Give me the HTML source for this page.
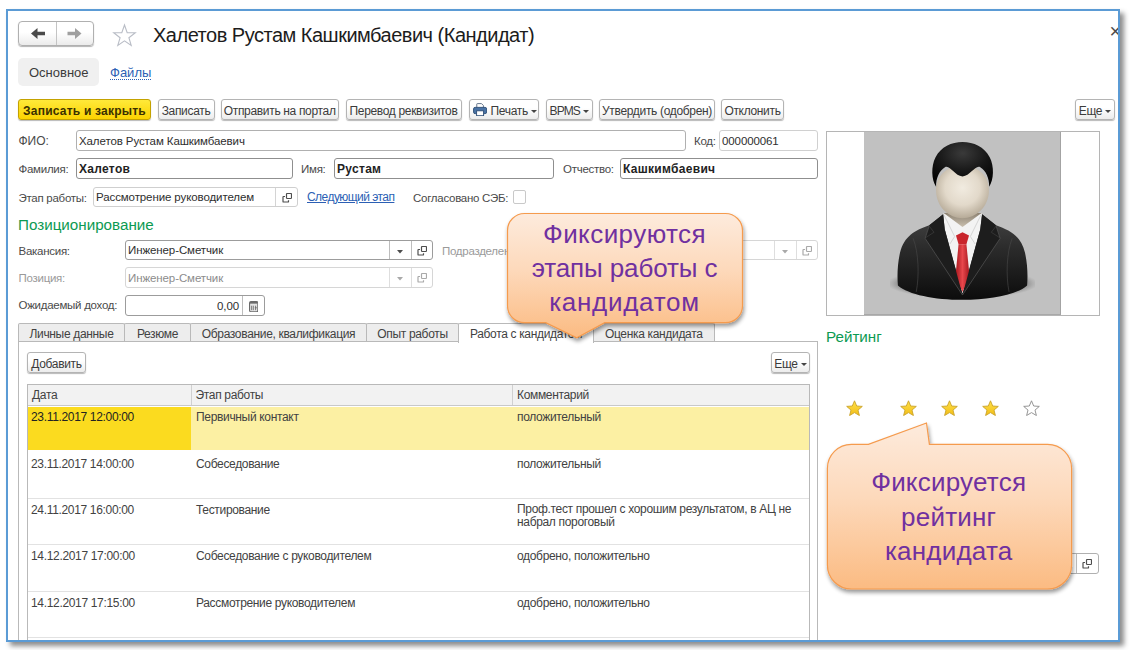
<!DOCTYPE html>
<html lang="ru">
<head>
<meta charset="utf-8">
<title>Халетов Рустам Кашкимбаевич (Кандидат)</title>
<style>
*{box-sizing:border-box;margin:0;padding:0}
html,body{width:1130px;height:650px;overflow:hidden;background:#fff}
body{font-family:"Liberation Sans",Arial,sans-serif;font-size:12px;color:#424242;letter-spacing:-0.33px;position:relative}
.abs{position:absolute;white-space:nowrap}
#frame{position:absolute;left:6px;top:9px;width:1114px;height:633px;border:2px solid #5b9bd5;background:#fff;box-shadow:4px 4px 5px rgba(0,0,0,.45);overflow:hidden}
#win{position:absolute;left:-8px;top:-11px;width:1130px;height:650px}
/* everything inside #win uses page coordinates */
.btn{position:absolute;height:21px;line-height:20px;padding-top:1px;border:1px solid #b4b4b4;border-radius:3px;background:linear-gradient(#fff,#fff 40%,#ececec);box-shadow:0 1px 1px rgba(0,0,0,.28);text-align:center;white-space:nowrap;color:#3b3b3b}
.btn.y{background:linear-gradient(#ffe93a,#fbd300);border-color:#c4a200;font-weight:bold;letter-spacing:.22px;color:#3a3000}
.inp{position:absolute;height:21px;line-height:20px;border:1px solid #b0b0b0;border-radius:3px;background:#fff;padding-left:2px;color:#2e2e2e;font-size:11.5px;letter-spacing:-.1px;white-space:nowrap;overflow:hidden}
.inp.b{font-weight:bold;font-size:12px;letter-spacing:.3px;color:#222;border-color:#8f8f8f}
.inp.dis{border-color:#d6d6d6;color:#8c8c8c}
.lbl{position:absolute;white-space:nowrap;line-height:22px;height:21px;color:#4a4a4a;font-size:11.5px;letter-spacing:-.27px}
.lbl.dis{color:#9a9a9a}
.grp{position:absolute;color:#0c9a52;font-size:15.2px;letter-spacing:0;white-space:nowrap}
a.lnk{position:absolute;color:#2c5fb4;text-decoration:underline;white-space:nowrap;line-height:20px}
.ib{position:absolute;top:0;bottom:0;width:22px;border-left:1px solid #bdbdbd;color:#4d4d4d}
.ib svg{position:absolute}
.dis .ib{color:#a9a9a9;border-color:#dedede}
.dda{display:inline-block;width:0;height:0;border-left:3px solid transparent;border-right:3px solid transparent;border-top:3.5px solid #444;vertical-align:middle;margin-left:3px;position:relative;top:0}
.tab{position:absolute;top:323px;height:18px;line-height:20px;overflow:hidden;border:1px solid #b9b9b9;border-bottom:none;background:#ededed;text-align:center;white-space:nowrap;border-radius:2px 2px 0 0}
.tab.act{background:#fff;height:19.5px;z-index:2}
.th{position:absolute;top:0;height:20px;line-height:21px;padding-left:4px;border-right:1px solid #d0d0d0;background:#f2f2f2;white-space:nowrap}
.row{position:absolute;left:0;width:782px;border-bottom:1px solid #e2e2e2}
.c{position:absolute;top:4px;white-space:nowrap;line-height:14px}
.callout{position:absolute;z-index:6;font-size:26px;letter-spacing:.22px;color:#7030a0;text-align:center;line-height:34.3px}
</style>
</head>
<body>
<div id="frame"><div id="win">
<svg width="0" height="0" style="position:absolute"><defs>
<symbol id="open" viewBox="0 0 10 10"><rect x="4.5" y="0.5" width="5" height="5" rx=".8" fill="none" stroke="currentColor" stroke-width="1.2"/><path d="M3 3.5 H1.6 Q1 3.5 1 4.1 V8.4 Q1 9 1.6 9 H5.9 Q6.5 9 6.5 8.4 V7.2" fill="none" stroke="currentColor" stroke-width="1.2"/></symbol>
<symbol id="dd" viewBox="0 0 6 4"><path d="M0 0 H6 L3 3.6 Z" fill="currentColor"/></symbol>
<linearGradient id="stg" x1="0" y1="0" x2="0" y2="1"><stop offset="0" stop-color="#ffe24a"/><stop offset="1" stop-color="#f2bd16"/></linearGradient>
<symbol id="star" viewBox="0 0 17 16"><path d="M8.5 0.8 L10.7 6 L16.3 6.4 L12 10.1 L13.4 15.5 L8.5 12.6 L3.6 15.5 L5 10.1 L0.7 6.4 L6.3 6 Z" fill="url(#stg)" stroke="#c9a32a" stroke-width=".9" stroke-linejoin="round"/></symbol>
<symbol id="star0" viewBox="0 0 17 16"><path d="M8.5 0.8 L10.7 6 L16.3 6.4 L12 10.1 L13.4 15.5 L8.5 12.6 L3.6 15.5 L5 10.1 L0.7 6.4 L6.3 6 Z" fill="#fff" stroke="#8a8a8a" stroke-width=".9" stroke-linejoin="round"/></symbol>
</defs></svg>


<!-- nav buttons -->
<div class="abs" style="left:18px;top:21px;width:76px;height:25px;border:1px solid #b0b0b0;border-radius:4px;background:linear-gradient(#fff,#fff 45%,#ebebeb);box-shadow:0 1px 1px rgba(0,0,0,.3)">
  <div class="abs" style="left:37px;top:0;width:1px;height:23px;background:#c4c4c4"></div>
  <svg class="abs" style="left:0;top:0" width="74" height="23" viewBox="0 0 74 23">
    <path d="M12 11.5 L18.5 6 V9.8 H26 V13.2 H18.5 V17 Z" fill="#4a4a4a"/>
    <path d="M62.5 11.5 L56 6 V9.8 H48.5 V13.2 H56 V17 Z" fill="#a0a0a0"/>
  </svg>
</div>
<!-- star -->
<svg class="abs" style="left:112px;top:22.7px" width="26" height="25" viewBox="0 0 26 25"><path d="M12.5 2 L15.2 9.6 L23.3 9.8 L16.9 14.7 L19.2 22.4 L12.5 17.9 L5.8 22.4 L8.1 14.7 L1.7 9.8 L9.8 9.6 Z" fill="#fff" stroke="#b9bdc6" stroke-width="1.1" stroke-linejoin="miter"/></svg>
<div class="abs" id="title" style="left:153px;top:24px;font-size:20px;line-height:22px;letter-spacing:-.5px;color:#1c1c1c">Халетов Рустам Кашкимбаевич (Кандидат)</div>
<div class="abs" style="left:1109.5px;top:19px;font-size:20px;line-height:24px;color:#4a4a4a;letter-spacing:0">×</div>

<!-- nav tabs -->
<div class="abs" style="left:18px;top:57.5px;width:80.5px;height:28.5px;border-radius:5px;background:#f0f0f0"></div>
<div class="abs" style="left:29px;top:64.7px;font-size:13px;line-height:15px;letter-spacing:0;color:#3b3b3b">Основное</div>
<div class="abs" style="left:110px;top:64.5px;font-size:13px;line-height:15px;letter-spacing:0;color:#2c5fb4;border-bottom:1px dotted #2c5fb4;height:15.5px">Файлы</div>

<!-- toolbar -->
<div class="btn y" style="left:18px;top:98.5px;width:133px">Записать и закрыть</div>
<div class="btn" style="left:157.5px;top:98.5px;width:57px">Записать</div>
<div class="btn" style="left:220.7px;top:98.5px;width:118px">Отправить на портал</div>
<div class="btn" style="left:345.5px;top:98.5px;width:116px">Перевод реквизитов</div>
<div class="btn" style="left:469px;top:98.5px;width:70px;text-align:left;padding-left:20.5px">Печать<i class="dda"></i>
  <svg class="abs" style="left:2.5px;top:3.5px" width="14.2" height="13.3" viewBox="0 0 15 14"><path d="M4 5 V1.2 Q4 .6 4.6 .6 H9 L11 2.6 V5" fill="#fff" stroke="#5d6f86" stroke-width="1"/><rect x=".6" y="4.6" width="13.8" height="6.6" rx="1.6" fill="#4a73a5" stroke="#2f4f78" stroke-width="1"/><rect x="3.8" y="8.2" width="7.4" height="5.2" fill="#fff" stroke="#2f4f78" stroke-width="1"/></svg>
</div>
<div class="btn" style="left:546px;top:98.5px;width:46.5px;letter-spacing:-.9px">BPMS<i class="dda"></i></div>
<div class="btn" style="left:599px;top:98.5px;width:116px">Утвердить (одобрен)</div>
<div class="btn" style="left:721px;top:98.5px;width:63px">Отклонить</div>
<div class="btn" style="left:1075px;top:98.5px;width:40px">Еще<i class="dda"></i></div>

<!-- row FIO -->
<div class="lbl" style="left:18.5px;top:130px;font-size:12px;letter-spacing:0">ФИО:</div>
<div class="inp" style="left:76px;top:130px;width:610px">Халетов Рустам Кашкимбаевич</div>
<div class="lbl" style="left:694px;top:130px">Код:</div>
<div class="inp" style="left:719px;top:130px;width:99px;border-color:#d0d0d0">000000061</div>

<!-- row Familia -->
<div class="lbl" style="left:18.5px;top:158px">Фамилия:</div>
<div class="inp b" style="left:76px;top:158px;width:217px">Халетов</div>
<div class="lbl" style="left:301px;top:158px">Имя:</div>
<div class="inp b" style="left:334px;top:158px;width:220px">Рустам</div>
<div class="lbl" style="left:563px;top:158px">Отчество:</div>
<div class="inp b" style="left:620px;top:158px;width:198px">Кашкимбаевич</div>

<!-- row Etap -->
<div class="lbl" style="left:18.5px;top:187px">Этап работы:</div>
<div class="inp" style="left:93px;top:187px;width:205px;height:20px;line-height:19px;border-color:#cfcfcf">Рассмотрение руководителем<div class="ib" style="right:0;border-color:#d4d4d4"><svg width="10" height="10" style="left:5.7px;top:5px"><use href="#open"/></svg></div></div>
<a class="lnk" style="left:307px;top:187px;letter-spacing:-.55px">Следующий этап</a>
<div class="lbl" style="left:413px;top:187px">Согласовано СЭБ:</div>
<div class="abs" style="left:513px;top:190px;width:13px;height:14px;border:1px solid #c9c9c9;border-radius:2px;background:#fff"></div>

<div class="grp" style="left:18px;top:215px;line-height:20px">Позиционирование</div>

<!-- Vakansia -->
<div class="lbl" style="left:18.5px;top:240px">Вакансия:</div>
<div class="inp" style="left:125px;top:240px;width:308px;height:20px;line-height:19px;border-color:#9c9c9c">Инженер-Сметчик<div class="ib" style="right:21px"><svg width="6" height="4" style="left:7px;top:8.5px"><use href="#dd"/></svg></div><div class="ib" style="right:0;width:21px"><svg width="10" height="10" style="left:5px;top:5px"><use href="#open"/></svg></div></div>
<div class="lbl dis" style="left:442px;top:240px">Подразделение:</div>
<div class="inp dis" style="left:530px;top:240px;width:288px;height:20px"><div class="ib" style="right:21px"><svg width="6" height="4" style="left:7px;top:8.5px"><use href="#dd"/></svg></div><div class="ib" style="right:0;width:21px"><svg width="10" height="10" style="left:5px;top:5px"><use href="#open"/></svg></div></div>

<!-- Pozicia -->
<div class="lbl dis" style="left:18.5px;top:267px">Позиция:</div>
<div class="inp dis" style="left:125px;top:267px;width:308px;height:21px;line-height:20px">Инженер-Сметчик<div class="ib" style="right:21px"><svg width="6" height="4" style="left:7px;top:8.5px"><use href="#dd"/></svg></div><div class="ib" style="right:0;width:21px"><svg width="10" height="10" style="left:5px;top:5px"><use href="#open"/></svg></div></div>

<!-- dohod -->
<div class="lbl" style="left:18.5px;top:294px">Ожидаемый доход:</div>
<div class="inp" style="left:125px;top:295px;width:140px;text-align:right;padding-right:25px;border-color:#9c9c9c">0,00<div class="ib" style="right:0"><svg width="9.4" height="11.3" viewBox="0 0 10 12" style="left:5.5px;top:4.5px"><rect x=".6" y=".6" width="8.8" height="10.8" rx="1.5" fill="#e4e4e4" stroke="#6a6a6a" stroke-width="1.2"/><rect x="1" y="1" width="8" height="1.8" fill="#6a6a6a"/><path d="M2.8 5v4.8M4.6 5v4.8M7 5v4.8M8.4 7.2h-2.2" stroke="#6a6a6a" stroke-width=".9" fill="none"/></svg></div></div>

<!-- tabs -->
<div class="abs" style="left:18px;top:341px;width:800px;height:320px;border:1px solid #b9b9b9;background:#fff"></div>
<div class="tab" style="left:18px;width:107px">Личные данные</div>
<div class="tab" style="left:124px;width:67px">Резюме</div>
<div class="tab" style="left:190px;width:177px">Образование, квалификация</div>
<div class="tab" style="left:366px;width:93px">Опыт работы</div>
<div class="tab act" style="left:458px;width:136px">Работа с кандидатом</div>
<div class="tab" style="left:593px;width:121.5px">Оценка кандидата</div>

<div class="btn" style="left:27px;top:352px;width:59px">Добавить</div>
<div class="btn" style="left:771px;top:352px;width:39px">Еще<i class="dda"></i></div>

<!-- table -->
<div class="abs" id="tbl" style="left:27px;top:384px;width:783px;height:280px;border:1px solid #b9b9b9;background:#fff;overflow:hidden">
  <div class="abs" style="left:0;top:0;width:782px;height:21px;background:#f2f2f2;border-bottom:1px solid #c9c9c9"></div>
  <div class="th" style="left:0;width:163.5px">Дата</div>
  <div class="th" style="left:163.5px;width:321.5px">Этап работы</div>
  <div class="th" style="left:485px;width:297px;border-right:none">Комментарий</div>

  <div class="row" style="top:20px;height:47px;border-bottom:none">
    <div class="abs" style="left:0;top:2px;width:782px;height:43px;background:#fcf0a3"></div>
    <div class="abs" style="left:0;top:2px;width:163px;height:43px;background:#fbdb1f"></div>
    <div class="c" style="left:3px;top:4.6px;color:#222">23.11.2017 12:00:00</div>
    <div class="c" style="left:168px;top:4.6px">Первичный контакт</div>
    <div class="c" style="left:489px;top:4.6px">положительный</div>
  </div>
  <div class="row" style="top:67.5px;height:46px">
    <div class="c" style="left:3px">23.11.2017 14:00:00</div>
    <div class="c" style="left:168px">Собеседование</div>
    <div class="c" style="left:489px">положительный</div>
  </div>
  <div class="row" style="top:113.7px;height:46.5px">
    <div class="c" style="left:3px">24.11.2017 16:00:00</div>
    <div class="c" style="left:168px">Тестирование</div>
    <div class="c" style="left:489px;line-height:13px">Проф.тест прошел с хорошим результатом, в АЦ не<br>набрал пороговый</div>
  </div>
  <div class="row" style="top:160.2px;height:46.4px">
    <div class="c" style="left:3px">14.12.2017 17:00:00</div>
    <div class="c" style="left:168px">Собеседование с руководителем</div>
    <div class="c" style="left:489px">одобрено, положительно</div>
  </div>
  <div class="row" style="top:206.6px;height:46.6px">
    <div class="c" style="left:3px">14.12.2017 17:15:00</div>
    <div class="c" style="left:168px">Рассмотрение руководителем</div>
    <div class="c" style="left:489px">одобрено, положительно</div>
  </div>
</div>

<!-- photo -->
<div class="abs" style="left:826px;top:131px;width:274px;height:184.6px;border:1px solid #b5b5b5;background:#fff"></div>
<div class="abs" style="left:863.6px;top:132px;width:197.2px;height:182.6px;background:#c1c1c1;border-right:1px solid #a3a3a3;border-bottom:1px solid #a8a8a8"></div>
<svg class="abs" style="left:890px;top:135px" width="145" height="170" viewBox="0 0 554 650">
<defs>
<radialGradient id="shd" cx=".5" cy=".5" r=".5"><stop offset="0" stop-color="#000" stop-opacity=".9"/><stop offset=".75" stop-color="#222" stop-opacity=".6"/><stop offset="1" stop-color="#777" stop-opacity="0"/></radialGradient>
<linearGradient id="suit" x1="0" y1="0" x2="0" y2="1"><stop offset="0" stop-color="#444"/><stop offset=".4" stop-color="#2b2b2b"/><stop offset="1" stop-color="#0c0c0c"/></linearGradient>
<radialGradient id="face" cx=".5" cy=".42" r=".6"><stop offset="0" stop-color="#f1ebe0"/><stop offset=".55" stop-color="#e2d9ca"/><stop offset="1" stop-color="#b3a794"/></radialGradient>
<linearGradient id="neck" x1="0" y1="0" x2="0" y2="1"><stop offset="0" stop-color="#8d8272"/><stop offset="1" stop-color="#c9bfae"/></linearGradient>
<linearGradient id="tie" x1="0" y1="0" x2="1" y2="0"><stop offset="0" stop-color="#a5161d"/><stop offset=".5" stop-color="#e8474c"/><stop offset="1" stop-color="#a5161d"/></linearGradient>
<radialGradient id="hair" cx=".5" cy=".25" r=".7"><stop offset="0" stop-color="#3a3a3a"/><stop offset=".6" stop-color="#161616"/><stop offset="1" stop-color="#050505"/></radialGradient>
</defs>
<ellipse cx="277" cy="568" rx="290" ry="58" fill="url(#shd)"/>
<path d="M203 303 L150 345 C95 365 55 385 38 450 C28 495 27 540 30 575 C70 610 170 630 277 630 C385 630 485 610 524 575 C527 540 526 495 516 450 C500 385 460 365 405 345 L352 303 Z" fill="url(#suit)"/>
<path d="M203 300 H352 L345 360 L277 607 L209 360 Z" fill="#f3f3f3"/>
<path d="M205 298 H350 L277 352 Z" fill="url(#neck)"/>
<path d="M205 303 L247 388 L228 418 M349 303 L307 388 L326 418" stroke="#c4c4c4" stroke-width="2.5" fill="none"/>
<path d="M252 384 L277 372 L302 384 L292 418 H262 Z" fill="#c9252c"/>
<path d="M262 418 H292 L304 540 L277 600 L250 540 Z" fill="url(#tie)"/>
<path d="M203 303 L150 345 L133 395 L277 612 L209 360 Z" fill="#1d1d1d"/>
<path d="M352 303 L405 345 L422 395 L277 612 L345 360 Z" fill="#1d1d1d"/>
<path d="M150 347 L134 395 L277 612 M405 347 L421 395 L277 612" stroke="#5a5a5a" stroke-width="2.5" fill="none"/>
<path d="M135 393 L168 372 L150 349 M420 393 L387 372 L405 349" stroke="#4a4a4a" stroke-width="2" fill="none"/>
<path d="M88 395 C110 450 112 540 100 600 M467 395 C445 450 443 540 455 600" stroke="#474747" stroke-width="2.5" fill="none"/>
<path d="M277 118 C340 118 380 160 378 215 C376 275 330 318 277 318 C224 318 178 275 176 215 C174 160 214 118 277 118 Z" fill="url(#face)"/>
<path d="M176 198 C158 170 156 120 174 85 C195 45 235 27 277 27 C320 27 360 45 381 85 C399 120 397 170 379 198 C380 165 366 135 345 123 C325 114 308 156 277 159 C246 156 230 114 210 123 C189 135 175 165 176 198 Z" fill="url(#hair)"/>
</svg>

<div class="grp" style="left:826px;top:327px;line-height:20px">Рейтинг</div>

<!-- stars -->
<svg class="abs" style="left:846.3px;top:399.8px" width="17" height="16"><use href="#star"/></svg>
<svg class="abs" style="left:899.7px;top:399.8px" width="17" height="16"><use href="#star"/></svg>
<svg class="abs" style="left:940.7px;top:399.8px" width="17" height="16"><use href="#star"/></svg>
<svg class="abs" style="left:982.1px;top:399.8px" width="17" height="16"><use href="#star"/></svg>
<svg class="abs" style="left:1023.3px;top:399.8px" width="17" height="16"><use href="#star0"/></svg>
<!-- rating input -->
<div class="inp" style="left:830px;top:553.4px;width:269.3px;height:20.4px"><div class="ib" style="right:0"><svg width="10" height="10" style="left:5px;top:5px"><use href="#open"/></svg></div></div>

<!-- callouts -->
<svg class="abs" style="left:0;top:0;overflow:visible;pointer-events:none;z-index:5" width="1130" height="650" viewBox="0 0 1130 650">
<defs>
<linearGradient id="cg" x1="0" y1="0" x2="0" y2="1"><stop offset="0" stop-color="#fdebdd"/><stop offset=".45" stop-color="#fdd9bb"/><stop offset="1" stop-color="#fbbb82"/></linearGradient>
<filter id="sh" x="-10%" y="-10%" width="125%" height="130%"><feGaussianBlur in="SourceAlpha" stdDeviation="2.2"/><feOffset dx="1.3" dy="3"/><feComponentTransfer><feFuncA type="linear" slope=".42"/></feComponentTransfer><feMerge><feMergeNode/><feMergeNode in="SourceGraphic"/></feMerge></filter>
</defs>
<path filter="url(#sh)" fill="url(#cg)" stroke="#f59b4e" stroke-width="1.2" d="M524.5 213.5 H725.5 A17 17 0 0 1 742.5 230.5 V305.7 A17 17 0 0 1 725.5 322.7 H604.7 L576.8 337.8 L545.7 322.7 H524.5 A17 17 0 0 1 507.5 305.7 V230.5 A17 17 0 0 1 524.5 213.5 Z"/>
<path filter="url(#sh)" fill="url(#cg)" stroke="#f59b4e" stroke-width="1.2" d="M851.4 444.3 H868.4 L926.5 423 L929.4 444.3 H1047.6 A24 24 0 0 1 1071.6 468.3 V565 A24 24 0 0 1 1047.6 589 H851.4 A24 24 0 0 1 827.4 565 V468.3 A24 24 0 0 1 851.4 444.3 Z"/>
</svg>
<div class="callout" style="left:507px;top:216.6px;width:235px"><span style="letter-spacing:.44px">Фиксируются</span><br><span style="letter-spacing:-.12px">этапы работы с</span><br><span style="letter-spacing:.72px">кандидатом</span></div>
<div class="callout" style="left:826.4px;top:465.4px;width:244.6px">Фиксируется<br>рейтинг<br>кандидата</div>

</div></div>
</body>
</html>
